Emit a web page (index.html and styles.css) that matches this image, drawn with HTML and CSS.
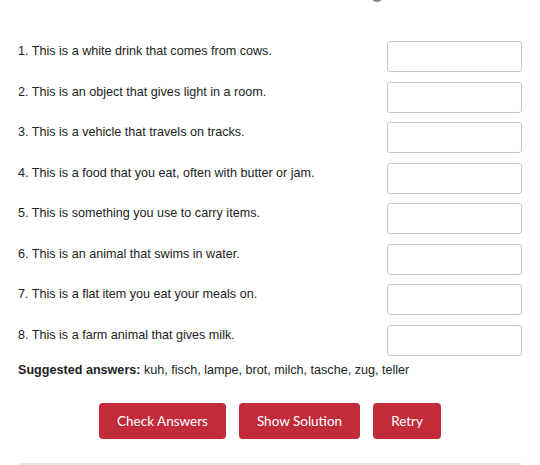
FILE: index.html
```html
<!DOCTYPE html>
<html>
<head>
<meta charset="utf-8">
<link rel="stylesheet" href="styles.css">
</head>
<body>
<div class="dot"></div>
<main class="quiz">
  <div class="rows">
    <div class="row"><span class="q">1. This is a white drink that comes from cows.</span><input class="ans" type="text"></div>
    <div class="row"><span class="q">2. This is an object that gives light in a room.</span><input class="ans" type="text"></div>
    <div class="row"><span class="q">3. This is a vehicle that travels on tracks.</span><input class="ans" type="text"></div>
    <div class="row"><span class="q">4. This is a food that you eat, often with butter or jam.</span><input class="ans" type="text"></div>
    <div class="row"><span class="q">5. This is something you use to carry items.</span><input class="ans" type="text"></div>
    <div class="row"><span class="q">6. This is an animal that swims in water.</span><input class="ans" type="text"></div>
    <div class="row"><span class="q">7. This is a flat item you eat your meals on.</span><input class="ans" type="text"></div>
    <div class="row"><span class="q">8. This is a farm animal that gives milk.</span><input class="ans" type="text"></div>
  </div>
  <p class="suggest"><b>Suggested answers:</b> kuh, fisch, lampe, brot, milch, tasche, zug, teller</p>
  <div class="buttons">
    <button class="btn">Check Answers</button>
    <button class="btn">Show Solution</button>
    <button class="btn">Retry</button>
  </div>
  <div class="footer"></div>
</main>
</body>
</html>
```
FILE: styles.css
```css
html, body {
  margin: 0;
  padding: 0;
  background: #ffffff;
  overflow: hidden;
}
body {
  font-family: "Liberation Sans", Arial, sans-serif;
  color: #222222;
  position: relative;
  height: 465px;
}
.dot {
  position: absolute;
  left: 370px;
  top: -12px;
  width: 14px;
  height: 14px;
  border-radius: 50%;
  background: #8a8a8a;
}
.quiz {
  width: 504px;
  padding: 41px 0 0 18px;
}
.rows {
  display: flex;
  flex-direction: column;
  gap: 9.57px;
}
.row {
  display: flex;
  justify-content: space-between;
  align-items: flex-start;
}
.q {
  font-size: 12.6px;
  line-height: 16px;
  padding-top: 2px;
}
.ans {
  box-sizing: border-box;
  width: 135px;
  height: 31px;
  margin: 0;
  border: 1px solid #c8c8c8;
  border-radius: 3px;
  background: #fff;
}
.suggest {
  margin: 6px 0 0 0;
  font-size: 12.6px;
  line-height: 16px;
}
.buttons {
  display: flex;
  justify-content: center;
  gap: 13px;
  margin-top: 25px;
}
.btn {
  height: 36px;
  padding: 0 18px;
  border: none;
  border-radius: 4px;
  background: #c22b3a;
  color: #ffffff;
  font-family: Lato, "Noto Sans", sans-serif;
  font-size: 13.5px;
}
.footer {
  margin-top: 24px;
  height: 4px;
  background: #e8e8e8;
  border-radius: 3px 3px 0 0;
}
```
